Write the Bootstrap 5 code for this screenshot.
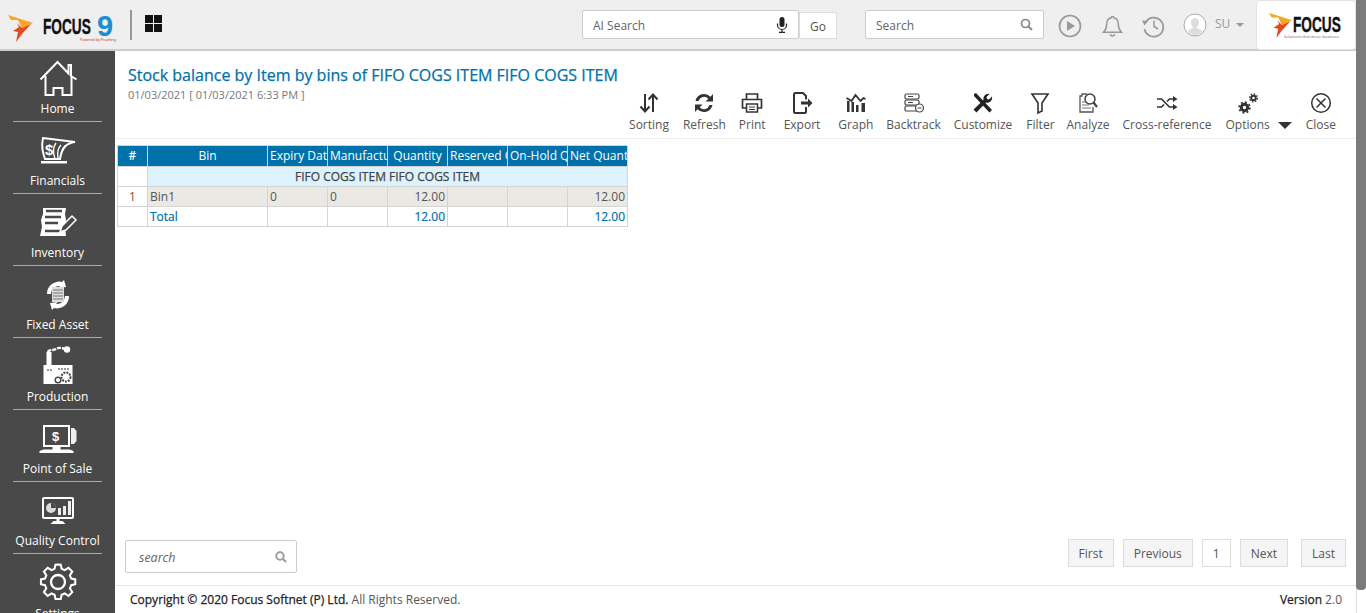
<!DOCTYPE html>
<html lang="en">
<head>
  <meta charset="UTF-8">
  <title>Stock balance by Item by bins</title>
  <link href="https://cdn.jsdelivr.net/npm/bootstrap@5.3.0/dist/css/bootstrap.min.css" rel="stylesheet">
  <style>
    html, body { height: 100%; overflow: hidden; }
    body { font-family: "Open Sans", sans-serif; font-size: 12px; color: #555; background: #fff; }
    .page-shell { width: 1366px; height: 613px; }
    .page-col { width: 1356px; height: 613px; }
    .fake-scroll { width: 10px; background: #fff; border-left: 1px solid #ddd; }
    .fake-thumb { height: 590px; background: #7b7b7b; border-radius: 0 0 4px 4px; margin-left: -1px; }

    /* top bar */
    .top-bar { height: 51px; background: #efefef; border-bottom: 2px solid #ccc; padding-top: 1px; flex: none; }
    .brand-box { width: 200px; height: 49px; position: relative; flex: none; }
    .brand-mark { position: absolute; left: 8px; top: 13px; }
    .brand-word { position: absolute; left: 43px; top: 15px; font-family: "Liberation Sans", sans-serif; font-weight: 700; font-size: 22px; line-height: 1; color: #111; -webkit-text-stroke: .4px #111; transform: scaleX(.62); transform-origin: left center; }
    .brand-nine { position: absolute; left: 97px; top: 11px; font-family: "Liberation Sans", sans-serif; font-weight: 700; font-size: 29px; line-height: 1; color: #1b8ed0; }
    .brand-by { position: absolute; left: 80px; top: 37px; font-size: 3.600px; line-height: 1; color: #c22; white-space: nowrap; }
    .brand-rule { position: absolute; left: 130px; top: 9px; width: 2px; height: 30px; background: #999; }
    .brand-grid { position: absolute; left: 145px; top: 14px; }
    .ai-box { width: 217px; height: 29px; margin: 0 0 1px 382px; background: #fff; border: 1px solid #ccc; border-radius: 2px; padding: 0 10px; color: #666; }
    .go-box { width: 38px; height: 27px; margin-top: 1px; background: #fff; border: 1px solid #ddd; color: #555; }
    .find-box { width: 179px; height: 29px; margin: 0 0 1px 28px; background: #fff; border: 1px solid #ccc; border-radius: 2px; padding: 0 10px; color: #666; }
    .ai-box span, .find-box span, .go-box span { padding-top: 3px; }
    .top-icons { margin: 1px 0 0 14px; }
    .top-bell { margin: 0 17px 0 19px; }
    .top-user { margin-left: 18px; }
    .user-tag { color: #999; margin: 0 0 2px 8px; }
    .user-caret { width: 0; height: 0; border-left: 4px solid transparent; border-right: 4px solid transparent; border-top: 4px solid #999; margin-left: 6px; }
    .logo-card { width: 100px; height: 50px; background: #fff; border: 1px solid #e4e4e4; border-radius: 4px; margin-left: auto; position: relative; flex: none; }
    .logo-mark { position: absolute; left: 11px; top: 11px; }
    .logo-word { position: absolute; left: 36px; top: 13px; font-family: "Liberation Sans", sans-serif; font-weight: 700; font-size: 22px; line-height: 1; color: #111; -webkit-text-stroke: .4px #111; transform: scaleX(.62); transform-origin: left center; }
    .logo-tag { position: absolute; left: 27px; top: 34px; font-size: 4px; line-height: 1; color: #666; white-space: nowrap; }

    /* left menu */
    .side-nav { width: 115px; background: #494949; overflow: hidden; flex: none; }
    .side-item { height: 72px; margin: 0 13px; border-bottom: 1px solid #aaa; color: #fff; flex: none; padding-bottom: 4px; }
    .side-item:first-child { height: 71px; }
    .side-item:last-child { border-bottom: 0; }
    .side-item span { font-size: 12px; line-height: 16px; white-space: nowrap; }
    .side-ico { height: 44px; }

    /* report head */
    .work-area { min-width: 0; }
    .head-zone { height: 88px; border-bottom: 1px solid #eee; position: relative; flex: none; }
    .rep-title { position: absolute; left: 13px; top: 13px; margin: 0; font-size: 16px; line-height: 22px; font-weight: 400; color: #0071a9; -webkit-text-stroke: .25px #0071a9; white-space: nowrap; }
    .rep-date { position: absolute; left: 13px; top: 36px; font-size: 11px; line-height: 15px; color: #777; }
    .tool-row { position: absolute; right: 20px; top: 39px; }
    .tool-btn { color: #555; line-height: 16px; white-space: nowrap; margin-left: 14px; }
    .tool-btn svg { display: block; margin: 1px 0 2px; }
    .tool-btn.gap-13 { margin-left: 13px; }
    .tool-btn.gap-12 { margin-left: 12px; }
    .tool-btn.gap-18 { margin-left: 18px; }
    .tool-caret { width: 0; height: 0; border-left: 7px solid transparent; border-right: 7px solid transparent; border-top: 7px solid #333; margin: 0 0 4px 8px; }

    /* table */
    .rep-table { table-layout: fixed; width: 510px; margin: 6px 0 0 2px; border-collapse: collapse; font-size: 12px; color: #555; }
    .rep-table th, .rep-table td { border: 1px solid #d4d4d4; height: 20px; padding: 0 2px; line-height: 18px; white-space: nowrap; overflow: hidden; }
    .rep-table .col-num { width: 30px; }
    .rep-table .col-bin { width: 120px; }
    .rep-table .col-val { width: 60px; }
    .rep-table thead th { background: #0071a9; color: #fff; font-weight: 400; text-align: center; height: 21px; }
    .rep-table thead th.col-num { font-weight: 600; }
    .rep-table thead th.cut { text-align: left; }
    .rep-table .group-row td { background: #dcf3fd; text-align: center; color: #444; -webkit-text-stroke: .25px #444; }
    .rep-table .group-row td.blank-cell { background: #fff; }
    .rep-table .data-row td { background: #eae9e3; }
    .rep-table .data-row td.num-cell, .rep-table .sum-row td.num-cell { background: #fff; text-align: center; color: #8a4a3a; }
    .rep-table .sum-row td { color: #0071a9; -webkit-text-stroke: .2px #0071a9; }
    .rep-table td.amt { text-align: right; }

    /* bottom */
    .foot-tools { padding: 0 10px 12px 10px; }
    .list-find { width: 172px; height: 33px; background: #fff; border: 1px solid #ccc; border-radius: 2px; padding: 0 9px 0 13px; font-style: italic; font-size: 12.500px; color: #666; margin-top: 1px; }
    .list-find span { padding-top: 4px; }
    .pager-btn { height: 28px; padding: 1px 10px 0; background: #f5f5f5; border: 1px solid #ddd; font-size: 12px; color: #555; margin-left: 9px; border-radius: 0; }
    .pager-btn.is-page { background: #fff; }
    .pager-btn.is-last { margin-left: 13px; }
    .copy-bar { height: 28px; border-top: 1px solid #e6e6e6; padding: 0 14px 0 15px; font-size: 12px; color: #555; flex: none; }
    .copy-bar b { font-weight: 400; color: #222; -webkit-text-stroke: .25px #222; }
  </style>
</head>
<body>
<div class="page-shell d-flex">
  <div class="page-col d-flex flex-column">

    <header class="top-bar d-flex align-items-center">
      <div class="brand-box">
        <svg class="brand-mark" width="26" height="28" viewBox="0 0 26 28">
          <path d="M0 1L25 9 14 14 10 6H3z" fill="#f5a623"/>
          <path d="M9 9l5 5 9-4-9 10-6 8 2-10-5-1 6-4z" fill="#e2491f"/>
        </svg>
        <span class="brand-word">FOCUS</span>
        <span class="brand-nine">9</span>
        <span class="brand-by">Powered by Prophecy</span>
        <div class="brand-rule"></div>
        <svg class="brand-grid" width="17" height="17" viewBox="0 0 17 17">
          <path d="M0 0h8v8H0zM9 0h8v8H9zM0 9h8v8H0zM9 9h8v8H9z" fill="#111"/>
        </svg>
      </div>
      <div class="ai-box d-flex align-items-center justify-content-between">
        <span>AI Search</span>
        <svg width="12" height="16" viewBox="0 0 12 16"><rect x="3.5" y="0" width="5" height="10" rx="2.5" fill="#222"/><path d="M1.500 6.500V8a4.500 4.500 0 0 0 9 0V6.500M6 12.500V15M3 15.300h6" fill="none" stroke="#222" stroke-width="1.200"/></svg>
      </div>
      <div class="go-box d-flex align-items-center justify-content-center"><span>Go</span></div>
      <div class="find-box d-flex align-items-center justify-content-between">
        <span>Search</span>
        <svg width="13" height="13" viewBox="0 0 13 13"><circle cx="5.500" cy="5.500" r="4" fill="none" stroke="#888" stroke-width="1.700"/><path d="M8.500 8.500L12 12" stroke="#888" stroke-width="2"/></svg>
      </div>
      <div class="top-icons d-flex align-items-center">
        <svg width="24" height="24" viewBox="0 0 24 24"><circle cx="12" cy="12" r="10.500" fill="none" stroke="#999" stroke-width="1.700"/><path d="M9 7l8 5-8 5z" fill="#999"/></svg>
        <svg class="top-bell" width="23" height="24" viewBox="0 0 23 24"><path d="M11.500 2.500a1.300 1.300 0 0 1 1.300 1.300c3.200.6 4.500 3.200 4.500 6.500 0 4 1 5.800 3.200 8H2.500c2.200-2.200 3.200-4 3.200-8 0-3.300 1.300-5.900 4.500-6.500a1.300 1.300 0 0 1 1.300-1.300zM9.500 20a2 2 0 0 0 4 0" fill="none" stroke="#999" stroke-width="1.500"/></svg>
        <svg width="24" height="24" viewBox="0 0 24 24"><path d="M4.500 8.500A9.500 9.500 0 1 1 3.500 15" fill="none" stroke="#999" stroke-width="1.800"/><path d="M1 6.500l6 .5-3.500 4.500z" fill="#999"/><path d="M13 6.500v6l4 2.500" fill="none" stroke="#999" stroke-width="1.500"/></svg>
      </div>
      <div class="top-user d-flex align-items-center">
        <svg width="24" height="24" viewBox="0 0 24 24"><circle cx="12" cy="12" r="11" fill="#fff" stroke="#aaa"/><path d="M12 5c2.800 0 4 2.200 4 4.500 0 2-1 3.500-1.800 4.300v1.500c1.800.8 4.200 1.500 5 3.200A10 10 0 0 1 12 22a10 10 0 0 1-7.200-3.500c.8-1.700 3.200-2.400 5-3.200v-1.500C9 13 8 11.500 8 9.500 8 7.200 9.200 5 12 5z" fill="#ddd"/></svg>
        <span class="user-tag">SU</span>
        <div class="user-caret"></div>
      </div>
      <div class="logo-card">
        <svg class="logo-mark" width="26" height="26" viewBox="0 0 26 28">
          <path d="M0 1L25 9 14 14 10 6H3z" fill="#f5a623"/>
          <path d="M9 9l5 5 9-4-9 10-6 8 2-10-5-1 6-4z" fill="#e2491f"/>
        </svg>
        <span class="logo-word">FOCUS</span>
        <span class="logo-tag">Solutions that move business</span>
      </div>
    </header>

    <div class="d-flex flex-grow-1 overflow-hidden">
      <nav class="side-nav d-flex flex-column">
        <div class="side-item d-flex flex-column align-items-center justify-content-end">
          <svg class="side-ico" width="40" height="44" viewBox="0 0 40 44"><path d="M2.500 22.500L19.500 5l11 11.500V8h2.500v11l5.500 3.500M7.500 19v19h8v-7h9v7h9V19" fill="none" stroke="#fff" stroke-width="2"/></svg>
          <span>Home</span>
        </div>
        <div class="side-item d-flex flex-column align-items-center justify-content-end">
          <svg class="side-ico" width="40" height="44" viewBox="0 0 40 44"><path d="M5 9l32 4c-8 1-13 5-15 17H7C5 24 3 18 5 9z" fill="none" stroke="#fff" stroke-width="2"/><path d="M18 14c-3 4-3 10-1 16M23 16c-3 3-4 7-3 13M28 16c-3 2-4 5-5 9" fill="none" stroke="#fff" stroke-width="1.400"/><path d="M3 32h26v2.500H3z" fill="#fff"/><text x="7" y="26" font-family="Liberation Sans, sans-serif" font-weight="700" font-size="15" fill="#fff">$</text></svg>
          <span>Financials</span>
        </div>
        <div class="side-item d-flex flex-column align-items-center justify-content-end">
          <svg class="side-ico" width="40" height="44" viewBox="0 0 40 44"><path d="M5 7h23l-1 6 1 6-1 7 1 9H2l2-9-1-7 2-6z" fill="#fff"/><path d="M8 10h16M7 16h16M7 22h13M7 30h16" stroke="#494949" stroke-width="2.500"/><path d="M22 31l2-6 10-10 4 4-10 10z" fill="#494949" stroke="#fff" stroke-width="1.500"/></svg>
          <span>Inventory</span>
        </div>
        <div class="side-item d-flex flex-column align-items-center justify-content-end">
          <svg class="side-ico" width="40" height="44" viewBox="0 0 40 44"><path d="M9 21a12 12 0 0 1 15-12l2-2 2 7-8 1 2-2a8 8 0 0 0-9 8zM31 23a12 12 0 0 1-15 12l-2 2-2-7 8-1-2 2a8 8 0 0 0 9-8z" fill="#fff"/><rect x="14" y="14" width="12" height="15" fill="#ddd"/><path d="M15 17h10M15 20h10M15 23h10M15 26h10" stroke="#777"/></svg>
          <span>Fixed Asset</span>
        </div>
        <div class="side-item d-flex flex-column align-items-center justify-content-end">
          <svg class="side-ico" width="40" height="44" viewBox="0 0 40 44"><path d="M5.500 39V20h3V7h5v13h21v19z" fill="#fff"/><path d="M10 7c1-3 5-1 8-3s6-1 9 0" fill="none" stroke="#fff" stroke-width="2.400" stroke-dasharray="4 1"/><circle cx="29" cy="4.500" r="3.200" fill="#fff"/><circle cx="28" cy="32" r="4.500" fill="none" stroke="#494949" stroke-width="2" stroke-dasharray="2 1"/><circle cx="20" cy="35" r="2.800" fill="none" stroke="#494949" stroke-width="1.500"/><path d="M9 25h5M20 24h11" stroke="#777" stroke-width="1.500" stroke-dasharray="2 1"/></svg>
          <span>Production</span>
        </div>
        <div class="side-item d-flex flex-column align-items-center justify-content-end">
          <svg class="side-ico" width="40" height="44" viewBox="0 0 40 44"><rect x="6" y="9" width="25" height="20" fill="none" stroke="#fff" stroke-width="2"/><path d="M33 11h3l2.500 3v10L36 27h-3z" fill="#eee"/><path d="M1.500 36v-2l4-1.500h9V30h8v2.500h9l4 1.500v2z" fill="#fff"/><text x="14" y="24" font-family="Liberation Sans, sans-serif" font-weight="700" font-size="13" fill="#fff">$</text></svg>
          <span>Point of Sale</span>
        </div>
        <div class="side-item d-flex flex-column align-items-center justify-content-end">
          <svg class="side-ico" width="40" height="44" viewBox="0 0 40 44"><rect x="5" y="9" width="30" height="20" rx="1" fill="none" stroke="#fff" stroke-width="2"/><circle cx="13" cy="19" r="5" fill="#ddd"/><path d="M13 19v-5a5 5 0 0 1 5 5z" fill="#494949"/><path d="M20 19h3v7h-3zM25 17h3v9h-3zM30 12h3v14h-3z" fill="#eee"/><path d="M20 29v3" stroke="#fff" stroke-width="3"/><path d="M12.500 35l3-3h9l3 3z" fill="#fff"/></svg>
          <span>Quality Control</span>
        </div>
        <div class="side-item d-flex flex-column align-items-center justify-content-end">
          <svg class="side-ico" width="40" height="44" viewBox="0 0 40 44"><path d="M20 4.500l3 .2 1 4.800 3.500 1.500 4.300-2.700 4.300 4.300-2.700 4.300 1.500 3.600 4.600 1v5.500l-4.600 1-1.500 3.600 2.700 4.300-4.300 4.300-4.300-2.700-3.500 1.500-1 4.800h-6l-1-4.800-3.500-1.500-4.300 2.700-4.300-4.300 2.700-4.300-1.500-3.600-4.600-1v-5.500l4.600-1 1.500-3.600-2.700-4.300 4.300-4.300 4.300 2.700 3.500-1.500 1-4.800z" transform="translate(2.500 -1.500) scale(.88)" fill="none" stroke="#fff" stroke-width="2.300"/><circle cx="20" cy="20" r="7" fill="none" stroke="#fff" stroke-width="2.300"/></svg>
          <span>Settings</span>
        </div>
      </nav>

      <main class="work-area d-flex flex-column flex-grow-1">
        <div class="head-zone">
          <h1 class="rep-title">Stock balance by Item by bins of FIFO COGS ITEM FIFO COGS ITEM</h1>
          <div class="rep-date">01/03/2021 [ 01/03/2021 6:33 PM ]</div>
          <div class="tool-row d-flex align-items-end">
            <div class="tool-btn d-flex flex-column align-items-center"><svg width="22" height="24" viewBox="0 0 22 24"><path d="M7 3v17M2.500 15.500L7 20.500l4.500-5M15 21V4M10.500 8.500L15 3.500l4.500 5" fill="none" stroke="#333" stroke-width="2"/></svg>Sorting</div>
            <div class="tool-btn d-flex flex-column align-items-center"><svg width="22" height="24" viewBox="0 0 22 24"><path d="M2.500 10a8.800 8.800 0 0 1 15-4.300l2.500-2.700v7.500h-7.500l2.800-2.800a5.800 5.800 0 0 0-9.800 2.300zM19.500 14a8.800 8.800 0 0 1-15 4.300L2 21v-7.500h7.500l-2.800 2.800a5.800 5.800 0 0 0 9.800-2.300z" fill="#333"/></svg>Refresh</div>
            <div class="tool-btn gap-13 d-flex flex-column align-items-center"><svg width="22" height="24" viewBox="0 0 22 24"><path d="M5.500 8V3h11v5M5 17H1.500V8.500h19V17H17" fill="none" stroke="#333" stroke-width="1.700"/><rect x="5.500" y="13" width="11" height="8" fill="none" stroke="#333" stroke-width="1.500"/><path d="M8 16h6M8 18.500h6" stroke="#333"/></svg>Print</div>
            <div class="tool-btn gap-18 d-flex flex-column align-items-center"><svg width="22" height="24" viewBox="0 0 22 24"><path d="M15 8.500V5l-3-3H4.500A1.500 1.500 0 0 0 3 3.500v17A1.500 1.500 0 0 0 4.500 22h9a1.500 1.500 0 0 0 1.500-1.500V16" fill="none" stroke="#333" stroke-width="2"/><path d="M10 10.500h7v-3l4.500 4.500-4.500 4.500v-3h-7z" fill="#333"/></svg>Export</div>
            <div class="tool-btn gap-18 d-flex flex-column align-items-center"><svg width="22" height="24" viewBox="0 0 22 24"><path d="M2 21V10h2.500v11zM6.500 21V11H9v10zM11 21v-7h2.500v7zM16.500 21v-9H20v9z" fill="#333"/><path d="M1.500 7l5 3 4-6 5 6 3-3 2 1" fill="none" stroke="#333" stroke-width="1.800"/></svg>Graph</div>
            <div class="tool-btn gap-13 d-flex flex-column align-items-center"><svg width="22" height="24" viewBox="0 0 22 24"><rect x="2" y="3" width="14" height="5" rx="1.500" fill="none" stroke="#444" stroke-width="1.200"/><rect x="2" y="9" width="14" height="5" rx="1.500" fill="none" stroke="#444" stroke-width="1.200"/><rect x="2" y="15" width="14" height="5" rx="1.500" fill="none" stroke="#444" stroke-width="1.200"/><path d="M5 5.500h5M5 11.500h5" stroke="#444"/><circle cx="16.500" cy="17" r="4" fill="#fff" stroke="#444" stroke-width="1.200"/><path d="M14.500 17h4" stroke="#444"/></svg>Backtrack</div>
            <div class="tool-btn gap-13 d-flex flex-column align-items-center"><svg width="24" height="24" viewBox="0 0 24 24"><path d="M3 3l2-1 16 17-2.500 2.500L3 5z" fill="#222"/><path d="M21 5.500l-3 3-2-.5-.5-2 3-3a5 5 0 0 0-6 6L2.500 18.500l3 3L15 11.500a5 5 0 0 0 6-6z" fill="#222"/></svg>Customize</div>
            <div class="tool-btn d-flex flex-column align-items-center"><svg width="20" height="24" viewBox="0 0 20 24"><path d="M2 3h16l-6 9v8l-4 2V12z" fill="none" stroke="#333" stroke-width="1.600"/></svg>Filter</div>
            <div class="tool-btn gap-12 d-flex flex-column align-items-center"><svg width="22" height="24" viewBox="0 0 22 24"><path d="M10 3H5v2H3v16h13v-5" fill="none" stroke="#555" stroke-width="1.300"/><path d="M5 11h4M5 14h7M5 17h9" stroke="#777"/><circle cx="13" cy="8" r="5" fill="#fff" stroke="#444" stroke-width="1.500"/><path d="M16.500 11.500L20 16" stroke="#444" stroke-width="2.200"/></svg>Analyze</div>
            <div class="tool-btn gap-13 d-flex flex-column align-items-center"><svg width="22" height="24" viewBox="0 0 22 24"><path d="M1 8h4.500l8 8H18M1 16h4.500L8 13.500M11 10.500L13.500 8H18" fill="none" stroke="#333" stroke-width="1.700"/><path d="M17 5l4.500 3-4.500 3zM17 13l4.500 3-4.500 3z" fill="#333"/></svg>Cross-reference</div>
            <div class="tool-btn d-flex flex-column align-items-center"><svg width="22" height="24" viewBox="0 0 22 24"><circle cx="7.500" cy="16.500" r="3.200" fill="none" stroke="#333" stroke-width="3"/><circle cx="7.500" cy="16.500" r="5.400" fill="none" stroke="#333" stroke-width="1.600" stroke-dasharray="2 2.200"/><circle cx="16.500" cy="7" r="2.300" fill="none" stroke="#333" stroke-width="2"/><circle cx="16.500" cy="7" r="4" fill="none" stroke="#333" stroke-width="1.300" stroke-dasharray="1.500 1.600"/></svg>Options</div>
            <div class="tool-caret"></div>
            <div class="tool-btn d-flex flex-column align-items-center"><svg width="22" height="24" viewBox="0 0 22 24"><circle cx="11" cy="12" r="9.300" fill="none" stroke="#333" stroke-width="1.500"/><path d="M6.500 7.500l9 9M15.500 7.500l-9 9" stroke="#333" stroke-width="1.500"/></svg>Close</div>
          </div>
        </div>

        <table class="rep-table">
          <thead>
            <tr><th class="col-num">#</th><th class="col-bin">Bin</th><th class="col-val cut">Expiry Date</th><th class="col-val cut">Manufacture</th><th class="col-val">Quantity</th><th class="col-val cut">Reserved Qty</th><th class="col-val cut">On-Hold Qty</th><th class="col-val cut">Net Quantity</th></tr>
          </thead>
          <tbody>
            <tr class="group-row"><td class="blank-cell"></td><td colspan="7">FIFO COGS ITEM FIFO COGS ITEM</td></tr>
            <tr class="data-row"><td class="num-cell">1</td><td>Bin1</td><td>0</td><td>0</td><td class="amt">12.00</td><td></td><td></td><td class="amt">12.00</td></tr>
            <tr class="sum-row"><td class="num-cell"></td><td>Total</td><td></td><td></td><td class="amt">12.00</td><td></td><td></td><td class="amt">12.00</td></tr>
          </tbody>
        </table>

        <div class="foot-tools d-flex justify-content-between align-items-start mt-auto">
          <div class="list-find d-flex align-items-center justify-content-between">
            <span>search</span>
            <svg width="12" height="12" viewBox="0 0 12 12"><circle cx="5" cy="5" r="3.800" fill="none" stroke="#999" stroke-width="1.800"/><path d="M8 8l3 3" stroke="#999" stroke-width="2"/></svg>
          </div>
          <div class="d-flex">
            <button class="pager-btn" type="button">First</button>
            <button class="pager-btn" type="button">Previous</button>
            <button class="pager-btn is-page" type="button">1</button>
            <button class="pager-btn" type="button">Next</button>
            <button class="pager-btn is-last" type="button">Last</button>
          </div>
        </div>
        <footer class="copy-bar d-flex align-items-center justify-content-between">
          <div><b>Copyright © 2020 Focus Softnet (P) Ltd.</b> All Rights Reserved.</div>
          <div><b>Version</b> 2.0</div>
        </footer>
      </main>
    </div>
  </div>
  <div class="fake-scroll"><div class="fake-thumb"></div></div>
</div>
<script src="https://cdn.jsdelivr.net/npm/bootstrap@5.3.0/dist/js/bootstrap.bundle.min.js"></script>
</body>
</html>
